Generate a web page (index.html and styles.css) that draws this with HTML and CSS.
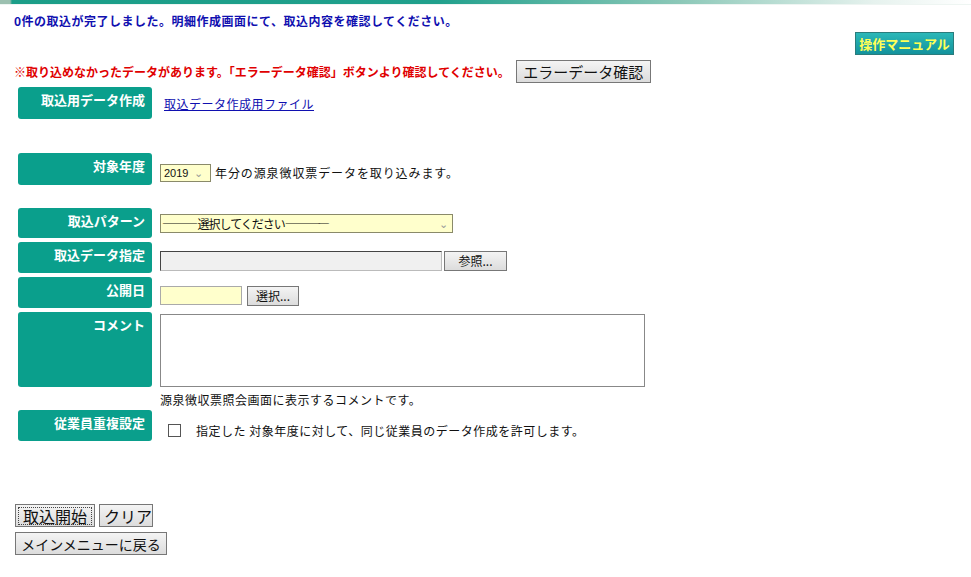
FILE: index.html
```html
<!DOCTYPE html>
<html>
<head>
  <title>源泉徴収票データ取込</title>
  <link rel="stylesheet" href="styles.css">
</head>
<body>

<div class="top-bar"></div>

<p class="msg-done">0件の取込が完了しました。明細作成画面にて、取込内容を確認してください。</p>

<div class="manual-row">
  <button class="manual-btn">操作マニュアル</button>
</div>

<div class="msg-error">
  <span>※取り込めなかったデータがあります。「エラーデータ確認」ボタンより確認してください。</span>
  <button class="btn btn-big">エラーデータ確認</button>
</div>

<div class="form">
  <div class="row">
    <div class="label h32">取込用データ作成</div>
    <div class="field pad-link"><a href="#">取込データ作成用ファイル</a></div>
  </div>

  <div class="row gap-big">
    <div class="label h32">対象年度</div>
    <div class="field pad-year">
      <span class="year-select">2019 <span class="chev">&#8964;</span></span>
      <span class="year-text">年分の源泉徴収票データを取り込みます。</span>
    </div>
  </div>

  <div class="row gap-mid">
    <div class="label h30">取込パターン</div>
    <div class="field pad-pattern">
      <span class="pattern-select">
        <span><span class="dash">―――</span><span class="pattern-text">選択してください</span><span class="dash dash-tight">――――</span></span>
        <span class="chev">&#8964;</span>
      </span>
    </div>
  </div>

  <div class="row">
    <div class="label h31">取込データ指定</div>
    <div class="field pad-file">
      <span class="file-box"></span>
      <button class="btn btn-small btn-browse">参照...</button>
    </div>
  </div>

  <div class="row">
    <div class="label h31">公開日</div>
    <div class="field pad-date">
      <span class="date-box"></span>
      <button class="btn btn-small btn-pick">選択...</button>
    </div>
  </div>

  <div class="row">
    <div class="label h75">コメント</div>
    <div class="field pad-comment">
      <textarea class="comment"></textarea>
    </div>
  </div>

  <div class="row note-row">
    <div class="label-empty"></div>
    <div class="field">源泉徴収票照会画面に表示するコメントです。</div>
  </div>

  <div class="row">
    <div class="label h31">従業員重複設定</div>
    <div class="field pad-check">
      <span class="checkbox"></span>
      <span>指定した 対象年度に対して、同じ従業員のデータ作成を許可します。</span>
    </div>
  </div>
</div>

<div class="actions">
  <div>
    <button class="btn btn-big btn-start"><span class="focus">取込開始</span></button>
    <button class="btn btn-big btn-clear">クリア</button>
  </div>
  <div>
    <button class="btn btn-big btn-menu">メインメニューに戻る</button>
  </div>
</div>

</body>
</html>
```

FILE: styles.css
```css
/* base */
body {
  margin: 0;
  font-family: "Noto Sans CJK JP", "Noto Sans", sans-serif;
  font-size: 12px;
  letter-spacing: 0.5px;
  color: #111;
  background: #fff;
}
.top-bar {
  height: 4px;
  background: linear-gradient(to right, #9cc0b0 0, #9cc0b0 10px, #1b9e88 12px, #20a08c 45%, #8cc8b8 70%, #e6f2ee 90%, #fff 100%);
  border-bottom: 1px solid #eef5f2;
}
.msg-done {
  margin: 8px 0 0 14px;
  color: #1010b0;
  font-weight: bold;
  line-height: 16px;
}

/* manual button */
.manual-row {
  display: flex;
  justify-content: flex-end;
  padding-right: 17px;
  margin-top: 3px;
}
.manual-btn {
  width: 99px;
  height: 23px;
  padding: 0;
  border: 1px solid #2a7c7c;
  background: linear-gradient(#2cb8b8, #13929c);
  color: #ffff55;
  font-family: inherit;
  font-size: 13px;
  font-weight: bold;
  letter-spacing: 0;
  white-space: nowrap;
}

/* error line */
.msg-error {
  display: flex;
  align-items: center;
  margin: 5px 0 0 14px;
  color: #e00000;
  font-weight: bold;
  letter-spacing: 0;
}
.msg-error .btn {
  margin-left: 6px;
  width: 135px;
}

/* generic buttons */
.btn {
  font-family: inherit;
  background: linear-gradient(#f4f4f4, #dcdcdc);
  border: 1px solid #777;
  color: #111;
  padding: 0 4px;
  letter-spacing: 0;
  white-space: nowrap;
}
.btn-big {
  height: 23px;
  font-size: 15px;
  line-height: 20px;
}
.btn-small {
  height: 20px;
  font-size: 12px;
}

/* form rows */
.form {
  margin: 4px 0 0 18px;
}
.row {
  display: flex;
  margin-bottom: 4px;
}
.gap-big {
  margin-top: 34px;
}
.gap-mid {
  margin-top: 23px;
}
.label {
  width: 134px;
  box-sizing: border-box;
  background: #0a9f8c;
  border-radius: 3px;
  color: #fff;
  font-weight: bold;
  font-size: 13px;
  letter-spacing: 0;
  text-align: right;
  padding: 3px 7px 0 0;
  flex-shrink: 0;
}
.label-empty {
  width: 134px;
  flex-shrink: 0;
}
.h30 { height: 30px; }
.h31 { height: 31px; }
.h32 { height: 32px; }
.h75 { height: 75px; }
.field {
  margin-left: 8px;
}
.pad-link {
  padding: 8px 0 0 4px;
}
.pad-link a { color: #1010b0; }
.pad-year {
  padding-top: 7px;
  display: flex;
  align-items: center;
}
.year-select {
  display: inline-block;
  box-sizing: border-box;
  width: 51px;
  height: 18px;
  border: 1px solid #8a8a6a;
  background: #ffffcc;
  font-family: "Liberation Sans", sans-serif;
  font-size: 11px;
  letter-spacing: 0;
  line-height: 16px;
  padding-left: 3px;
  margin-right: 4px;
}
.year-text {
  letter-spacing: 0.9px;
}
.chev {
  color: #999;
  font-size: 11px;
  margin-left: 2px;
}
.pad-pattern { padding-top: 6px; }
.pattern-select {
  display: flex;
  justify-content: space-between;
  box-sizing: border-box;
  width: 293px;
  height: 19px;
  border: 1px solid #8a8a6a;
  background: #ffffcc;
  padding: 0 4px 0 1px;
  line-height: 17px;
  letter-spacing: 0;
}
.pattern-text {
  letter-spacing: -1px;
}
.dash {
  letter-spacing: -0.5px;
}
.dash-tight {
  letter-spacing: -3px;
}
.pad-file {
  padding-top: 6px;
  display: flex;
  align-items: center;
}
.file-box {
  display: inline-block;
  box-sizing: border-box;
  width: 282px;
  height: 20px;
  background: #f0f0f0;
  border: 1px solid #bbb;
  border-top-color: #444;
  border-left-color: #444;
}
.btn-browse {
  width: 63px;
  margin-left: 2px;
}
.pad-date {
  padding-top: 6px;
  display: flex;
  align-items: center;
}
.date-box {
  display: inline-block;
  box-sizing: border-box;
  width: 82px;
  height: 19px;
  background: #ffffcc;
  border: 1px solid #aaa;
}
.btn-pick {
  width: 52px;
  margin-left: 5px;
}
.pad-comment { padding-top: 2px; }
.comment {
  display: block;
  box-sizing: border-box;
  width: 485px;
  height: 73px;
  border: 1px solid #888;
  resize: none;
  margin: 0;
}
.note-row {
  margin-top: 0;
  margin-bottom: 2px;
  line-height: 17px;
}
.pad-check {
  padding-top: 9px;
  display: flex;
  align-items: center;
}
.checkbox {
  display: inline-block;
  width: 11px;
  height: 11px;
  border: 1px solid #555;
  margin: 0 15px 0 8px;
}

/* bottom buttons */
.actions {
  margin: 63px 0 0 15px;
}
.actions div {
  display: flex;
  gap: 4px;
  margin-bottom: 5px;
}
.btn-start {
  width: 80px;
  padding: 2px;
  font-size: 16px;
}
.btn-clear {
  width: 54px;
  font-size: 16px;
}
.btn-menu {
  width: 152px;
  font-size: 14px;
}
.focus {
  display: block;
  border: 1px dotted #444;
  line-height: 16px;
}
```
